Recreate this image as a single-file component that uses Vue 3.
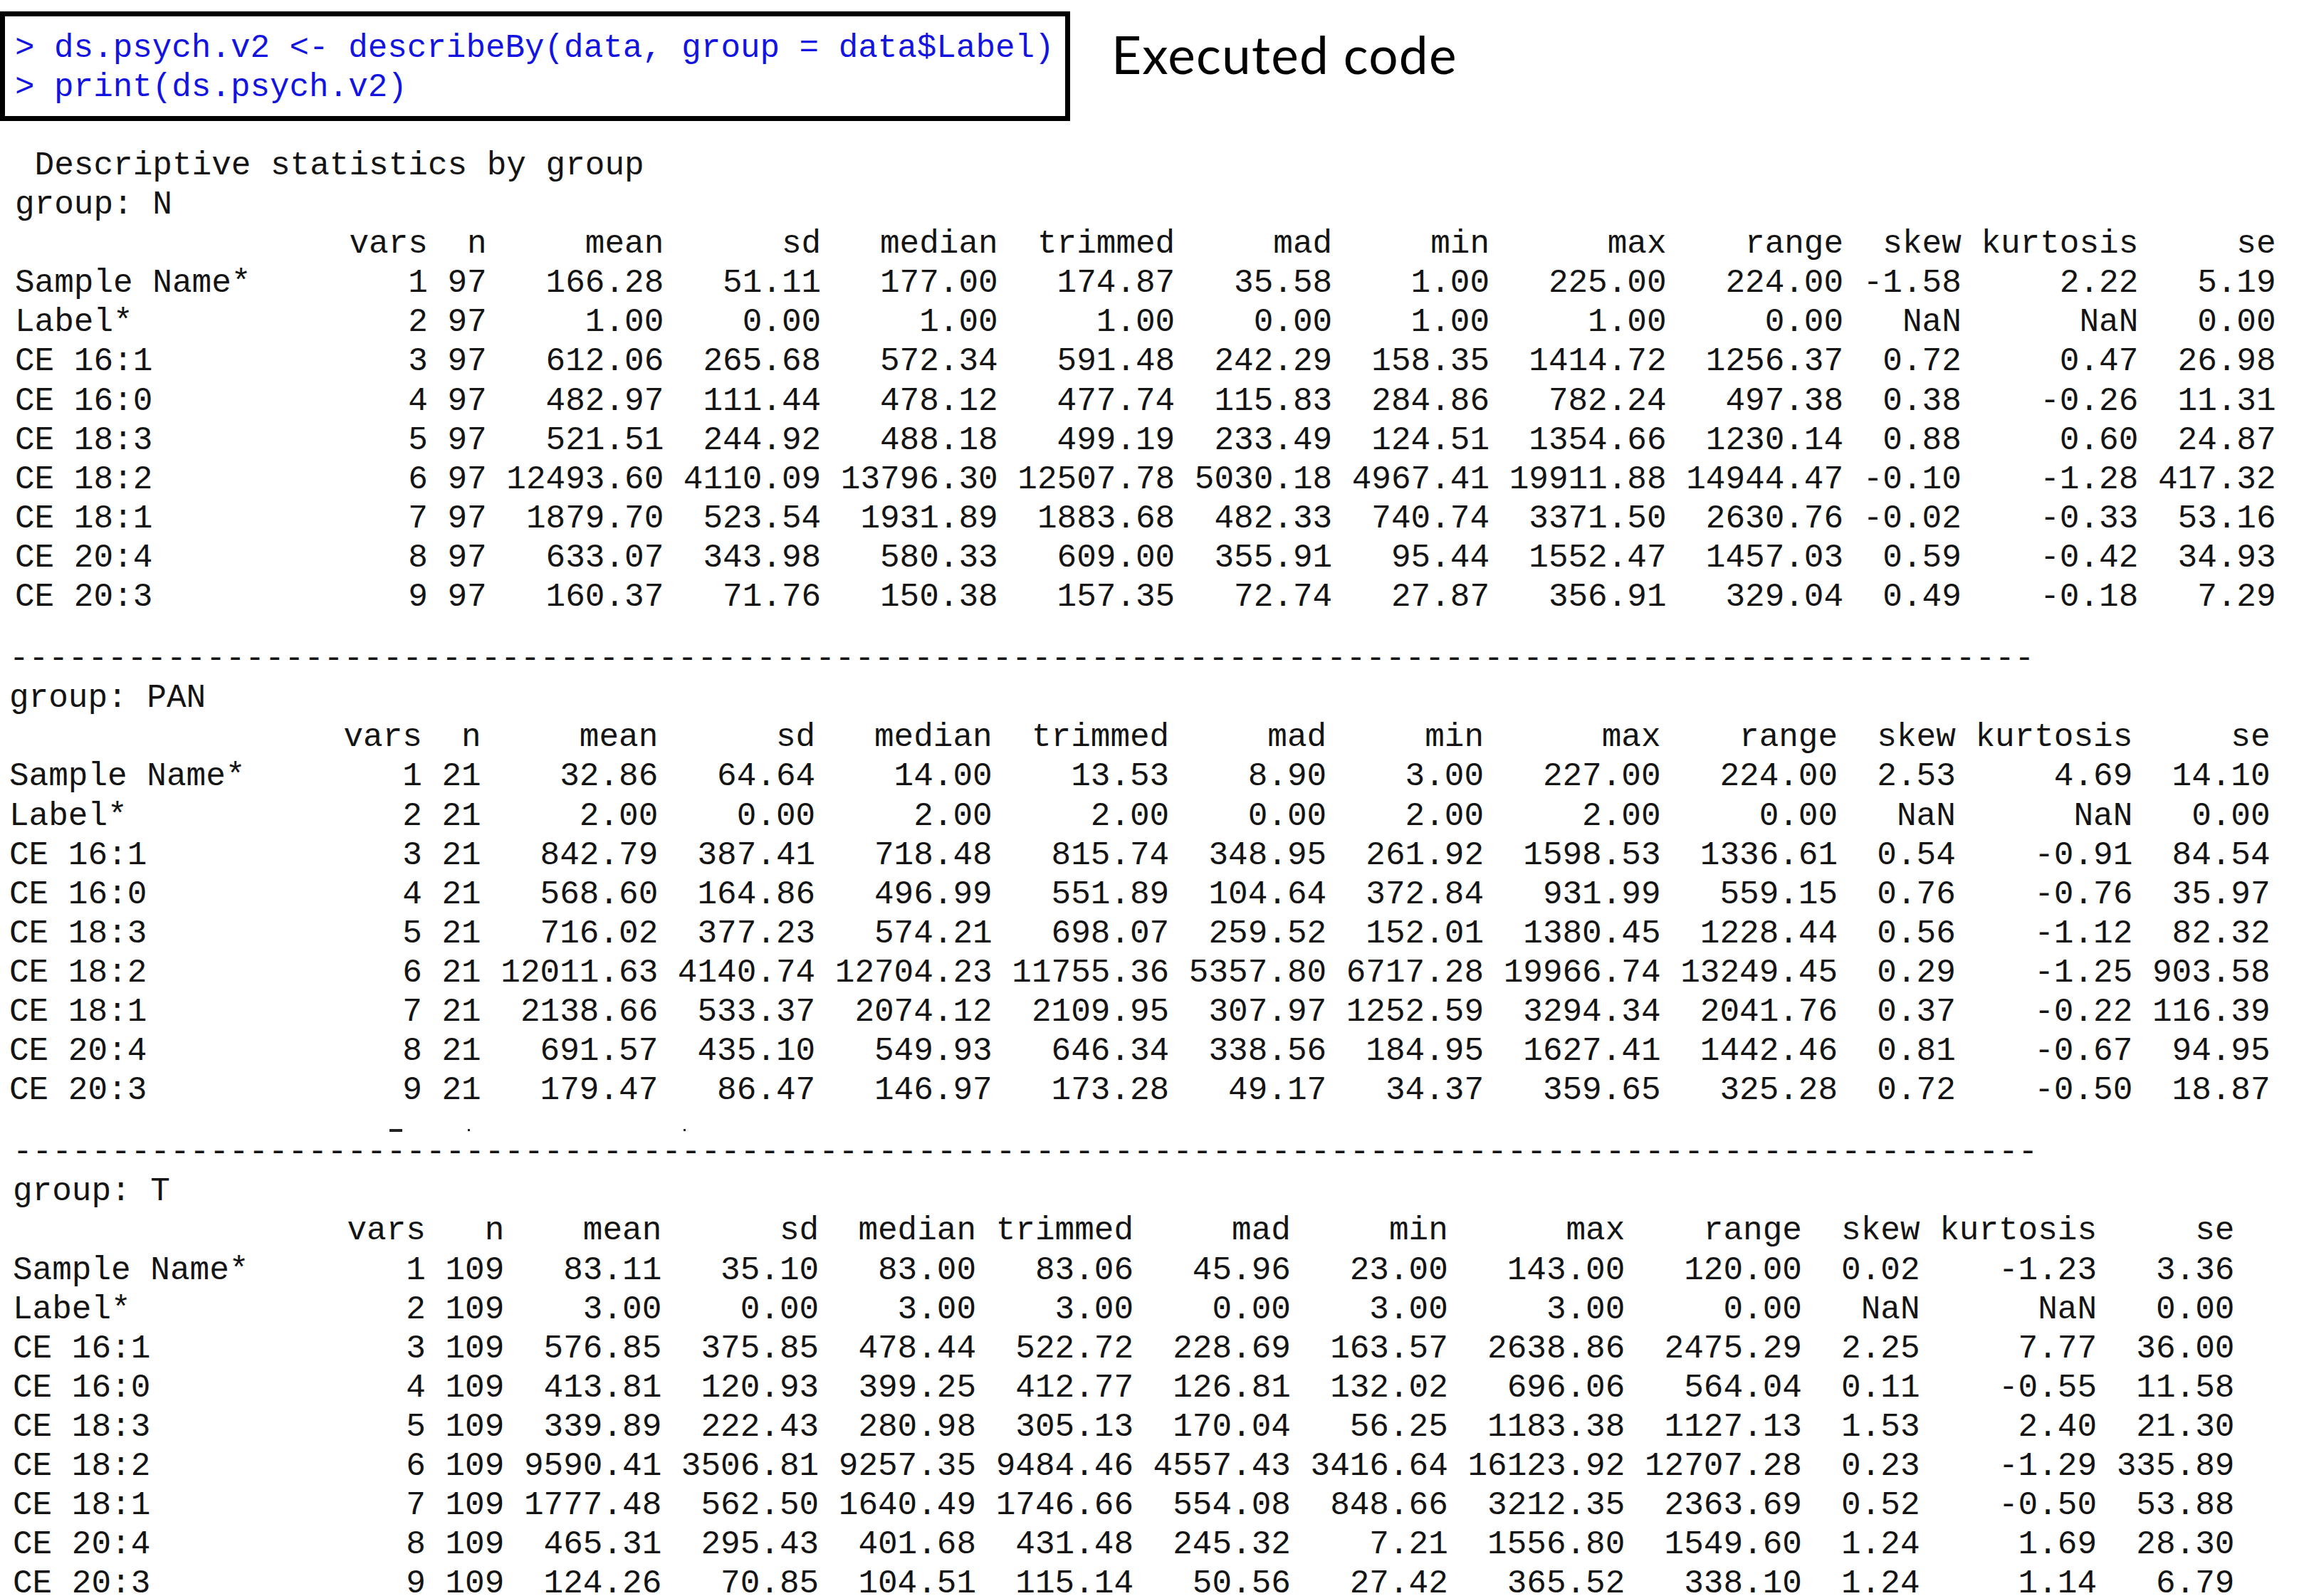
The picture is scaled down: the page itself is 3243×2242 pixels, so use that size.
<script setup>
const headers = ['', 'vars', 'n', 'mean', 'sd', 'median', 'trimmed', 'mad', 'min', 'max', 'range', 'skew', 'kurtosis', 'se']
const groups = [
  {
    name: 'N', cls: 'g1', widths: [16, 5, 3, 9, 8, 9, 9, 8, 8, 9, 9, 6, 9, 7], rows: [
      ['Sample Name*', 1, 97, '166.28', '51.11', '177.00', '174.87', '35.58', '1.00', '225.00', '224.00', '-1.58', '2.22', '5.19'],
      ['Label*', 2, 97, '1.00', '0.00', '1.00', '1.00', '0.00', '1.00', '1.00', '0.00', 'NaN', 'NaN', '0.00'],
      ['CE 16:1', 3, 97, '612.06', '265.68', '572.34', '591.48', '242.29', '158.35', '1414.72', '1256.37', '0.72', '0.47', '26.98'],
      ['CE 16:0', 4, 97, '482.97', '111.44', '478.12', '477.74', '115.83', '284.86', '782.24', '497.38', '0.38', '-0.26', '11.31'],
      ['CE 18:3', 5, 97, '521.51', '244.92', '488.18', '499.19', '233.49', '124.51', '1354.66', '1230.14', '0.88', '0.60', '24.87'],
      ['CE 18:2', 6, 97, '12493.60', '4110.09', '13796.30', '12507.78', '5030.18', '4967.41', '19911.88', '14944.47', '-0.10', '-1.28', '417.32'],
      ['CE 18:1', 7, 97, '1879.70', '523.54', '1931.89', '1883.68', '482.33', '740.74', '3371.50', '2630.76', '-0.02', '-0.33', '53.16'],
      ['CE 20:4', 8, 97, '633.07', '343.98', '580.33', '609.00', '355.91', '95.44', '1552.47', '1457.03', '0.59', '-0.42', '34.93'],
      ['CE 20:3', 9, 97, '160.37', '71.76', '150.38', '157.35', '72.74', '27.87', '356.91', '329.04', '0.49', '-0.18', '7.29'],
    ],
  },
  {
    name: 'PAN', cls: 'g2', widths: [16, 5, 3, 9, 8, 9, 9, 8, 8, 9, 9, 6, 9, 7], rows: [
      ['Sample Name*', 1, 21, '32.86', '64.64', '14.00', '13.53', '8.90', '3.00', '227.00', '224.00', '2.53', '4.69', '14.10'],
      ['Label*', 2, 21, '2.00', '0.00', '2.00', '2.00', '0.00', '2.00', '2.00', '0.00', 'NaN', 'NaN', '0.00'],
      ['CE 16:1', 3, 21, '842.79', '387.41', '718.48', '815.74', '348.95', '261.92', '1598.53', '1336.61', '0.54', '-0.91', '84.54'],
      ['CE 16:0', 4, 21, '568.60', '164.86', '496.99', '551.89', '104.64', '372.84', '931.99', '559.15', '0.76', '-0.76', '35.97'],
      ['CE 18:3', 5, 21, '716.02', '377.23', '574.21', '698.07', '259.52', '152.01', '1380.45', '1228.44', '0.56', '-1.12', '82.32'],
      ['CE 18:2', 6, 21, '12011.63', '4140.74', '12704.23', '11755.36', '5357.80', '6717.28', '19966.74', '13249.45', '0.29', '-1.25', '903.58'],
      ['CE 18:1', 7, 21, '2138.66', '533.37', '2074.12', '2109.95', '307.97', '1252.59', '3294.34', '2041.76', '0.37', '-0.22', '116.39'],
      ['CE 20:4', 8, 21, '691.57', '435.10', '549.93', '646.34', '338.56', '184.95', '1627.41', '1442.46', '0.81', '-0.67', '94.95'],
      ['CE 20:3', 9, 21, '179.47', '86.47', '146.97', '173.28', '49.17', '34.37', '359.65', '325.28', '0.72', '-0.50', '18.87'],
    ],
  },
  {
    name: 'T', cls: 'g3', widths: [16, 5, 4, 8, 8, 8, 8, 8, 8, 9, 9, 6, 9, 7], rows: [
      ['Sample Name*', 1, 109, '83.11', '35.10', '83.00', '83.06', '45.96', '23.00', '143.00', '120.00', '0.02', '-1.23', '3.36'],
      ['Label*', 2, 109, '3.00', '0.00', '3.00', '3.00', '0.00', '3.00', '3.00', '0.00', 'NaN', 'NaN', '0.00'],
      ['CE 16:1', 3, 109, '576.85', '375.85', '478.44', '522.72', '228.69', '163.57', '2638.86', '2475.29', '2.25', '7.77', '36.00'],
      ['CE 16:0', 4, 109, '413.81', '120.93', '399.25', '412.77', '126.81', '132.02', '696.06', '564.04', '0.11', '-0.55', '11.58'],
      ['CE 18:3', 5, 109, '339.89', '222.43', '280.98', '305.13', '170.04', '56.25', '1183.38', '1127.13', '1.53', '2.40', '21.30'],
      ['CE 18:2', 6, 109, '9590.41', '3506.81', '9257.35', '9484.46', '4557.43', '3416.64', '16123.92', '12707.28', '0.23', '-1.29', '335.89'],
      ['CE 18:1', 7, 109, '1777.48', '562.50', '1640.49', '1746.66', '554.08', '848.66', '3212.35', '2363.69', '0.52', '-0.50', '53.88'],
      ['CE 20:4', 8, 109, '465.31', '295.43', '401.68', '431.48', '245.32', '7.21', '1556.80', '1549.60', '1.24', '1.69', '28.30'],
      ['CE 20:3', 9, 109, '124.26', '70.85', '104.51', '115.14', '50.56', '27.42', '365.52', '338.10', '1.24', '1.14', '6.79'],
    ],
  },
]

function fmt(cells, widths) {
  return cells
    .map((c, i) => (i === 0 ? String(c).padEnd(widths[0]) : String(c).padStart(widths[i])))
    .join('')
}

function body(g) {
  return [fmt(headers, g.widths), ...g.rows.map((r) => fmt(r, g.widths))].join('\n')
}

const rule = '-'.repeat(103)
</script>

<template>
  <div class="page">
    <div class="top">
      <pre class="code">&gt; ds.psych.v2 &lt;- describeBy(data, group = data$Label)
&gt; print(ds.psych.v2)</pre>
      <div class="caption">Executed code</div>
    </div>
    <pre class="out title"> Descriptive statistics by group</pre>
    <template v-for="(g, i) in groups" :key="g.name">
      <div v-if="i === 2" class="crumbs">
        <i class="crumb dash"></i>
        <i class="crumb dot-a"></i>
        <i class="crumb dot-b"></i>
      </div>
      <pre v-if="i > 0" class="out rule" :class="g.cls">{{ rule }}</pre>
      <pre class="out" :class="g.cls">group: {{ g.name }}
{{ body(g) }}</pre>
    </template>
  </div>
</template>

<style scoped>
.page {
  width: 3243px;
  height: 2242px;
  overflow: hidden;
  background: #fff;
  font-family: "Liberation Mono", monospace;
}
pre {
  margin: 0;
  font-family: inherit;
  font-size: 46.02px;
  line-height: 55.1px;
  color: #141414;
}
.top {
  display: flex;
  align-items: flex-start;
  padding-top: 16px;
}
.code {
  box-sizing: border-box;
  width: 1503px;
  height: 154px;
  border: 7px solid #000;
  padding: 18px 0 0 14px;
  font-size: 45.9px;
  color: #1414e0;
}
.caption {
  margin: 15px 0 0 58px;
  font-family: Lato, "Open Sans", sans-serif;
  font-size: 73px;
  line-height: 90px;
  letter-spacing: 1.2px;
  color: #000;
}
.title {
  margin: 36px 0 0 21px;
}
.g1 {
  margin-left: 21px;
}
.g2 {
  margin-left: 13px;
}
.g3 {
  margin-left: 18px;
}
.rule {
  margin-top: 32px;
}
.crumbs {
  position: relative;
  height: 0;
}
.crumb {
  position: absolute;
  top: 26px;
  width: 3px;
  height: 3px;
  background: #222;
}
.dash {
  left: 547px;
  width: 18px;
  height: 4px;
}
.dot-a {
  left: 657px;
}
.dot-b {
  left: 960px;
}
</style>
